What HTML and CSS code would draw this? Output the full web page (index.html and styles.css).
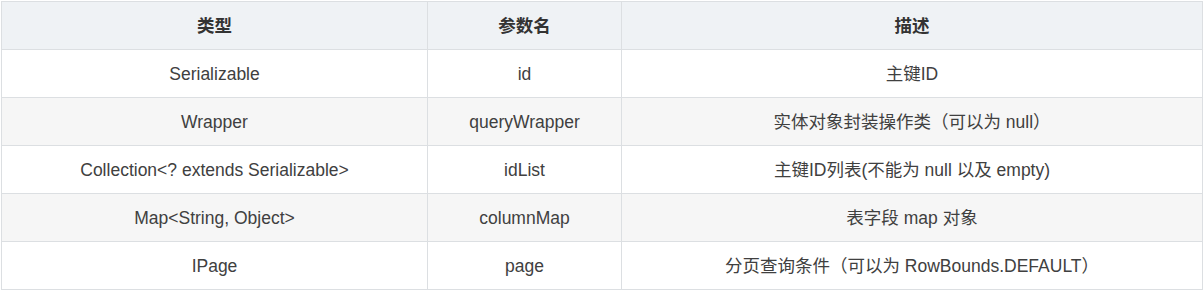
FILE: index.html
```html
<!DOCTYPE html>
<html lang="zh">
<head>
<meta charset="utf-8">
<link rel="stylesheet" href="styles.css">
</head>
<body>
<div class="wrap">
<table class="params">
  <colgroup>
    <col class="c1"><col class="c2"><col class="c3">
  </colgroup>
  <thead>
    <tr><th>类型</th><th>参数名</th><th>描述</th></tr>
  </thead>
  <tbody>
    <tr><td>Serializable</td><td>id</td><td>主键ID</td></tr>
    <tr><td>Wrapper</td><td>queryWrapper</td><td>实体对象封装操作类（可以为 null）</td></tr>
    <tr><td>Collection&lt;? extends Serializable&gt;</td><td>idList</td><td>主键ID列表(不能为 null 以及 empty)</td></tr>
    <tr><td>Map&lt;String, Object&gt;</td><td>columnMap</td><td>表字段 map 对象</td></tr>
    <tr><td>IPage</td><td>page</td><td>分页查询条件（可以为 RowBounds.DEFAULT）</td></tr>
  </tbody>
</table>
</div>
</body>
</html>
```
FILE: styles.css
```css
html, body {
  margin: 0;
  padding: 0;
  background: #ffffff;
}
.wrap {
  padding: 1px 0 0 1px;
}
.params {
  border-collapse: collapse;
  width: 1202px;
  table-layout: fixed;
  font-family: "Liberation Sans", Arial, "Noto Sans CJK SC", sans-serif;
  font-size: 17.5px;
  color: #404040;
}
.c1 { width: 426px; }
.c2 { width: 194px; }
.c3 { width: auto; }
.params th,
.params td {
  border: 1px solid #dcdfe2;
  height: 48px;
  padding: 0 12px;
  text-align: center;
  box-sizing: border-box;
  line-height: 22px;
}
.params th {
  background: #eff2f5;
  font-weight: bold;
  color: #333333;
}
.params tbody tr:nth-child(even) td {
  background: #f6f6f6;
}
```
